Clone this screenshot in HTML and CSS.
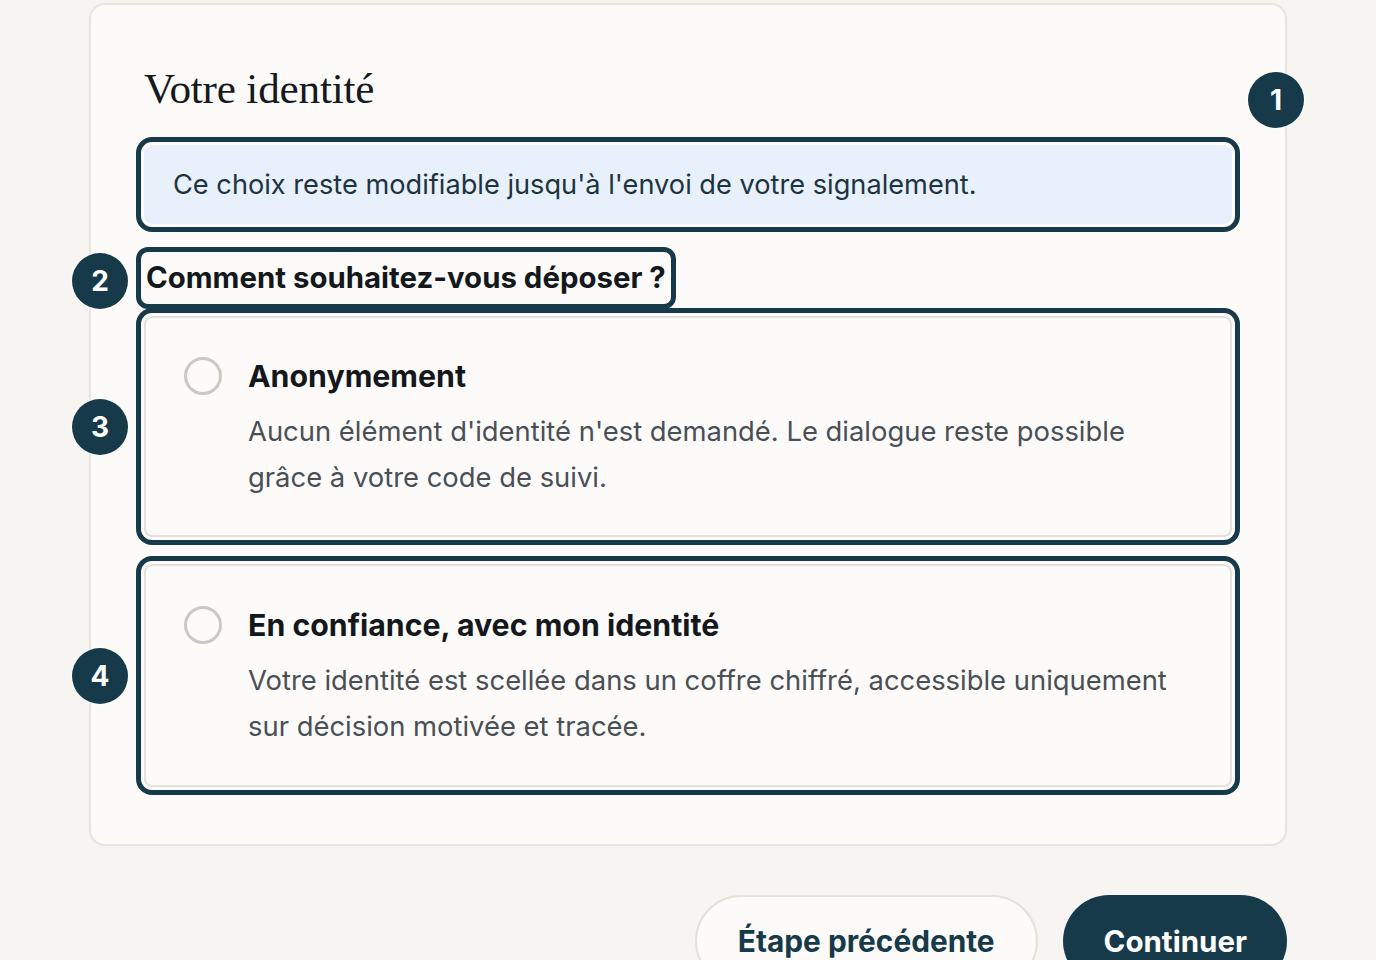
FILE: index.html
```html
<!DOCTYPE html>
<html lang="fr">
<head>
<meta charset="utf-8">
<title>Votre identité</title>
<link rel="stylesheet" href="styles.css">
</head>
<body>
<main class="page">
  <section class="card">
    <h1 class="title">Votre identité</h1>
    <span class="badge badge-1">1</span>
    <p class="info hl">Ce choix reste modifiable jusqu'à l'envoi de votre signalement.</p>
    <fieldset class="choices">
      <legend class="legend hl">Comment souhaitez-vous déposer ?</legend>
      <span class="badge badge-2">2</span>
      <label class="option hl">
        <span class="badge badge-side">3</span>
        <span class="radio"></span>
        <span class="option-body">
          <span class="option-title">Anonymement</span>
          <span class="option-desc">Aucun élément d'identité n'est demandé. Le dialogue reste possible grâce à votre code de suivi.</span>
        </span>
      </label>
      <label class="option hl">
        <span class="badge badge-side">4</span>
        <span class="radio"></span>
        <span class="option-body">
          <span class="option-title">En confiance, avec mon identité</span>
          <span class="option-desc">Votre identité est scellée dans un coffre chiffré, accessible uniquement sur décision motivée et tracée.</span>
        </span>
      </label>
    </fieldset>
  </section>
  <div class="actions">
    <button class="btn btn-secondary" type="button">Étape précédente</button>
    <button class="btn btn-primary" type="button">Continuer</button>
  </div>
</main>
</body>
</html>
```
FILE: styles.css
```css
* { box-sizing: border-box; }
html, body {
  margin: 0;
  background: #f6f5f1;
  font-family: Inter, "Noto Sans", sans-serif;
  color: #15191d;
}
.page {
  width: 1198px;
  margin: 3px auto 0;
}
.card {
  position: relative;
  background: #fcfbf9;
  border: 2px solid #e7e4de;
  border-radius: 16px;
  padding: 59px 53px 57px;
}
.title {
  margin: 0;
  font-family: "Liberation Serif", serif;
  font-weight: 400;
  font-size: 43.2px;
  line-height: 49px;
  color: #16191d;
  letter-spacing: -0.2px;
}
.hl {
  outline: 5px solid #173a4b;
  outline-offset: 3px;
}
.info {
  margin: 32px 0 0;
  background: #e8f0fb;
  border-radius: 8px;
  padding: 22px 29px;
  font-size: 27.2px;
  line-height: 35px;
  color: #1c3441;
}
.choices {
  border: 0;
  margin: 31px 0 0;
  padding: 0;
  min-width: 0;
}
.legend {
  padding: 0 2px;
  font-size: 29.4px;
  font-weight: 700;
  line-height: 46px;
  color: #14181c;
  border-radius: 4px;
  margin-bottom: 15px;
}
.option {
  position: relative;
  display: flex;
  gap: 26px;
  background: #fcfbf9;
  border: 2px solid #e4e1db;
  border-radius: 8px;
  padding: 38px 42px 35px 38px;
  margin-bottom: 27px;
  cursor: pointer;
}
.option:last-child { margin-bottom: 0; padding-top: 39px; padding-bottom: 36px; }
.radio {
  flex: none;
  width: 38px;
  height: 38px;
  border: 3px solid #ccc8c2;
  border-radius: 50%;
  margin-top: 1px;
  background: #fcfbf9;
}
.option-body {
  display: flex;
  flex-direction: column;
  gap: 12px;
}
.option-title {
  font-size: 30.3px;
  font-weight: 700;
  line-height: 40px;
  color: #14181c;
}
.option-desc {
  font-size: 27.4px;
  line-height: 46px;
  color: #4a4f56;
}
.badge {
  position: absolute;
  width: 56px;
  height: 56px;
  border-radius: 50%;
  background: #173a4b;
  color: #fff;
  font-weight: 700;
  font-size: 28px;
  display: flex;
  align-items: center;
  justify-content: center;
  box-shadow: 0 0 0 1px rgba(255,255,255,0.7);
}
.badge-1 { left: 1157px; top: 67px; }
.badge-2 { left: -19px; top: 248px; }
.badge-side { left: -74px; top: 50%; transform: translateY(-50%); }
.actions {
  display: flex;
  justify-content: flex-end;
  gap: 25px;
  margin-top: 49px;
}
.btn {
  font-family: Inter, "Noto Sans", sans-serif;
  font-size: 29.8px;
  font-weight: 700;
  line-height: 46px;
  padding: 21px 41px;
  border-radius: 48px;
  cursor: pointer;
}
.btn-secondary {
  background: #fcfbf9;
  border: 2px solid #e4e1db;
  color: #173a4b;
}
.btn-primary {
  background: #173a4b;
  border: 0;
  padding: 23px 40px 23px 41px;
  font-size: 29.5px;
  color: #fff;
}
```
